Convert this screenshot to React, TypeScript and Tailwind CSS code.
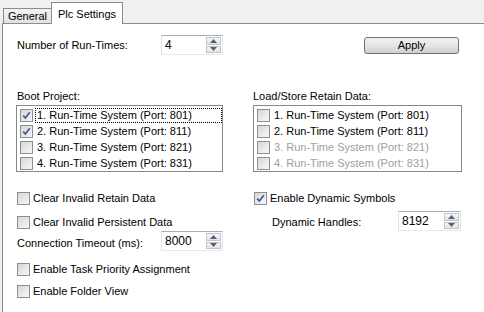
import React from "react"

function Check({ checked }: { checked?: boolean }) {
  return (
    <span className="flex h-[13px] w-[13px] shrink-0 items-center justify-center border border-[#8f8f8f] bg-linear-to-br from-[#d6d6d6] to-[#f8f8f8]">
      {checked && (
        <svg width="9" height="9" viewBox="0 0 9 9">
          <path d="M1.2 4.6 L3.4 7 L7.8 1.2" fill="none" stroke="#3f5697" strokeWidth="1.7" />
        </svg>
      )}
    </span>
  )
}

function Arrow({ up }: { up?: boolean }) {
  return (
    <svg width="7" height="4" viewBox="0 0 7 4">
      <path d={up ? "M0 4 L3.5 0 L7 4 Z" : "M0 0 L3.5 4 L7 0 Z"} fill="#4d6185" />
    </svg>
  )
}

function Spin({ value, className }: { value: string; className: string }) {
  return (
    <div className={"flex items-stretch border border-[#abadb3] border-b-[#e3e9ef] border-x-[#dfe3ea] bg-white " + className}>
      <div className="flex flex-1 items-center pl-[3px] text-[12px]">{value}</div>
      <div className="my-px mr-px flex w-[15px] flex-col gap-px">
        <div className="flex flex-1 items-center justify-center border border-[#c4c4c4] bg-linear-to-b from-[#f7f7f7] to-[#e2e2e2]">
          <Arrow up />
        </div>
        <div className="flex flex-1 items-center justify-center border border-[#c4c4c4] bg-linear-to-b from-[#f7f7f7] to-[#e2e2e2]">
          <Arrow />
        </div>
      </div>
    </div>
  )
}

type Item = { label: string; checked?: boolean; disabled?: boolean; focus?: boolean }

function ListBox({ items, className }: { items: Item[]; className: string }) {
  return (
    <div className={"flex flex-col border border-[#828790] bg-white pt-px " + className}>
      {items.map((it) => (
        <div key={it.label} className="flex h-[16px] items-center pl-[3px]">
          <Check checked={it.checked} />
          <span
            className={
              "ml-[2px] flex h-[15px] flex-1 items-center border pl-px text-[11px] " +
              (it.focus ? "border-dotted border-black " : "border-transparent ") +
              (it.disabled ? "text-[#a0a0a0]" : "text-black")
            }
          >
            {it.label}
          </span>
        </div>
      ))}
    </div>
  )
}

function CheckRow({ label, checked, className }: { label: string; checked?: boolean; className: string }) {
  return (
    <div className={"flex h-[16px] items-center " + className}>
      <Check checked={checked} />
      <span className="ml-[3px] text-[11px]">{label}</span>
    </div>
  )
}

export default function App() {
  const ports = ["801", "811", "821", "831"]
  return (
    <div className="flex h-[312px] w-[484px] flex-col overflow-hidden bg-[#f0f0f0] text-black" style={{ fontFamily: '"Liberation Sans", Arial, sans-serif' }}>
      <div className="flex h-[23px] items-end pl-[3px]">
        <div className="flex h-[15px] w-[49px] items-center justify-center border border-b-0 border-[#898c95] bg-linear-to-b from-[#f3f3f3] to-[#e3e3e3] text-[11px]">
          General
        </div>
        <div className="relative z-10 -mb-px -ml-px flex h-[22px] w-[72px] items-start justify-center border border-b-0 border-[#898c95] bg-white pt-[3px] text-[11px]">
          Plc Settings
        </div>
      </div>
      <div className="ml-[2px] flex-1 border-l border-t border-[#898c95] bg-white pl-[13px] pt-[11px]">
        <div className="flex h-[20px] items-center">
          <span className="w-[145px] pl-px text-[11px]">Number of Run-Times:</span>
          <Spin value="4" className="h-[20px] w-[62px]" />
          <div className="ml-[141px] flex h-[17px] w-[95px] items-center justify-center rounded-[3px] border border-[#707070] bg-linear-to-b from-[#f2f2f2] via-[#e6e6e6] to-[#cfcfcf] text-[11px]">
            Apply
          </div>
        </div>
        <div className="flex">
          <div className="flex w-[207px] flex-col">
            <div className="mt-[34px] h-[14px] pl-px text-[11px] leading-[14px]">Boot Project:</div>
            <ListBox
              className="mt-[2px] h-[67px] w-[207px]"
              items={ports.map((p, i) => ({ label: `${i + 1}. Run-Time System (Port: ${p})`, checked: i < 2, focus: i === 0 }))}
            />
            <CheckRow className="mt-[18px] pl-px" label="Clear Invalid Retain Data" />
            <CheckRow className="mt-[8px] pl-px" label="Clear Invalid Persistent Data" />
            <div className="mt-[1px] flex h-[20px] items-center">
              <span className="w-[145px] pl-px pt-[4px] text-[11px]">Connection Timeout (ms):</span>
              <Spin value="8000" className="h-[20px] w-[62px]" />
            </div>
            <CheckRow className="mt-[10px] pl-px" label="Enable Task Priority Assignment" />
            <CheckRow className="mt-[6px] pl-px" label="Enable Folder View" />
          </div>
          <div className="ml-[30px] flex w-[209px] flex-col">
            <div className="mt-[34px] h-[14px] text-[11px] leading-[14px]">Load/Store Retain Data:</div>
            <ListBox
              className="mt-[2px] h-[67px] w-[209px]"
              items={ports.map((p, i) => ({ label: `${i + 1}. Run-Time System (Port: ${p})`, disabled: i >= 2 }))}
            />
            <CheckRow className="mt-[18px] pl-px" label="Enable Dynamic Symbols" checked />
            <div className="mt-[5px] flex h-[20px] items-center">
              <span className="w-[145px] shrink-0 pl-[19px] pt-[2px] text-[11px]">Dynamic Handles:</span>
              <Spin value="8192" className="h-[20px] w-[63px]" />
            </div>
          </div>
        </div>
      </div>
    </div>
  )
}
